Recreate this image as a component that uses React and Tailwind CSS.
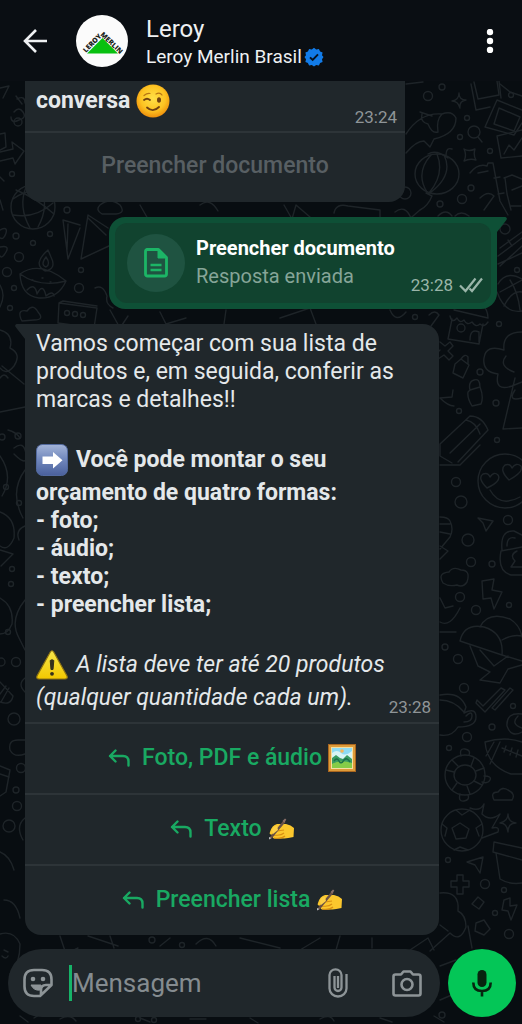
import { useState } from "react";

const Doodles = () => (
  <svg
    className="absolute inset-0 h-full w-full"
    viewBox="0 0 522 1024"
    preserveAspectRatio="xMidYMin slice"
    fill="none"
    stroke="#1e2428"
    strokeWidth="1.4"
    strokeLinecap="round"
    strokeLinejoin="round"
    aria-hidden="true"
  >
    {/* left side */}
    <path d="M0 88l9-2-6 12M16 96l6 8m-8 8q5-6 9 0t-4 8q-8 4-8-3m6-18q8-4 8 4" />
    <circle cx="18" cy="122" r="4" />
    <path d="M0 134l5-1 1 14-6 3M0 152l13-3-1-7 12 9-9 13-2-6-13 3" />
    <circle cx="12" cy="174" r="2.500" />
    <path d="M0 177l4 4M0 200l3 10" />
    <circle cx="33" cy="207" r="22" />
    <path d="M13 199q20-14 38-4M13 215q22 4 40-12M26 187q-8 20 4 41M40 187q10 18-2 40M16 190q20 8 38 24" />
    <path d="M63 220l5 39 12-31M63 220l17 5M68 224l-1 26M88 215l-7 44 30-14M88 215l20 13M88 218l18 17" />
    <circle cx="67" cy="210" r="3" />
    <circle cx="16" cy="236" r="3" />
    <circle cx="50" cy="234" r="2.500" />
    <circle cx="33" cy="243" r="2.500" />
    <circle cx="19" cy="257" r="4.500" />
    <circle cx="7" cy="272" r="4.500" />
    <circle cx="81" cy="270" r="2.500" />
    <circle cx="79" cy="288" r="4.500" />
    <circle cx="14" cy="288" r="2.500" />
    <circle cx="10" cy="308" r="2.500" />
    <path d="M0 230q8-4 6 3t-6 5M0 247q10-2 6 5t-6 4M0 285q6 10 0 22" />
    <path d="M48 250q-16 14-3 21q12-2 6-14zM46 257q-6 8 0 10q5-3 0-10M20 274q20-14 46 7q-8 18-27 17q-18-2-19-24q20 14 46 7" />
    <path d="M27 290q8-8 10 4q6-12 9 2q7-6 8 0M32 280h1M42 278h1M50 282h1" />
    <path d="M59 303l38 5-3 20-36-5zM59 303l4-2 34 5M21 319q-4-10 6-8q6-8 11 1q7 8-4 8l-12 1z" />
    <circle cx="67" cy="313" r="2.500" />
    <circle cx="75" cy="314" r="2.500" />
    <circle cx="83" cy="315" r="2.500" />
    <path d="M95 288q8-4 12 8q-2 8 6 12M100 205q10-8 20 0q6 8-4 9h-14q-7-4-2-9M140 205l8 14M200 205q10-8 18 6M284 205l8 14 4-14 14 12M334 213q2-10 14-7l32 4v8M395 212q10-8 16 6" />
    <path d="M110 310l10 18 8-12M160 312l6 12 20-6M226 310l-2 14M280 318l30-10 6 16M390 310q6 14 16 2" />
    <path d="M0 330q14 4 10 18q12 6 4 18q-8 10-14 2M2 366l22 18M0 378q4-6 8 0M0 412l25-5M8 430q8 2 12 8" />
    <circle cx="18" cy="436" r="3" />
    <circle cx="2" cy="437" r="3" />
    <path d="M14 448q10-8 12 6t-12 0M0 456q14 20 2 40M25 470q-16 22-2 48M0 512q16 6 14 26q-6 14-14 8M0 550l13 4-12 12M25 526q-10 4-6 14M0 598q14 8 12 26q-4 10-12 10M25 600q-16 20-6 38l6 12" />
    <circle cx="6" cy="487" r="2.500" />
    <circle cx="19" cy="503" r="2.500" />
    <circle cx="12" cy="569" r="2.500" />
    <circle cx="11" cy="584" r="2.500" />
    <circle cx="8" cy="632" r="2.500" />
    <circle cx="1" cy="662" r="4" />
    <circle cx="16" cy="662" r="4.500" />
    <path d="M0 682l13 14q-2 10-13 6M1 702l8-14M0 694l6-8M25 678q-8 6 0 14" />
    <circle cx="14" cy="719" r="6" />
    <path d="M10 750q-2-10 8-10h7M10 750q4 8 15 4M0 766l10 4-4 22-6 4M0 774l9 3" />
    <circle cx="21" cy="768" r="4.500" />
    <circle cx="16" cy="790" r="3" />
    <circle cx="17" cy="806" r="4.500" />
    <circle cx="9" cy="826" r="6" />
    <path d="M25 818q-10 8-2 22M0 852q10 4 14 18M4 900q12 0 16 18M0 934q14-4 20 10q0 20-10 30M4 950l4 2M2 956q4 4 6 0" />

    {/* right side */}
    <path d="M406 84l17-2M500 84l10 8 12 4" />
    <circle cx="428" cy="96" r="4.500" />
    <circle cx="442" cy="87" r="3" />
    <circle cx="511" cy="95" r="2.500" />
    <path d="M459 93q0 7 7 7q-7 1-6 8q-2-7-8-7q7-1 7-8M471 84l5 26 14-3M474 82l4 17 21-4-2-14M499 81l2 17M497 100l25 10M497 100l-12 27 29 8 8-12M499 108l21 9-6 14-20-7z" />
    <path d="M406 134q14-22 36-20q10-4 14 4q0 16-22 21l-4 8-6-6q-8 0-18 12M422 114q-2 8 6 10q4 10 10 8q-2-12 4-18M420 112l12 4" />
    <circle cx="467" cy="118" r="2.500" />
    <circle cx="460" cy="137" r="2.500" />
    <circle cx="474" cy="132" r="6" />
    <path d="M478 137l4 5M497 136l25-6M497 136l4 22 21-2M504 154l5-9 5 5 8-12M464 149q5 3 11 0q-2 6 1 11q-6-2-12 1q3-6 0-12" />
    <circle cx="490" cy="151" r="2.500" />
    <ellipse cx="437" cy="174" rx="22" ry="20" />
    <path d="M431 155q-16 18-4 37M437 154q8 20-8 39M444 155q10 20-14 38M428 154q8-5 20 4M446 155q0-8 6-6M426 193l6 3q-4 10-12 14l-14 12M470 173q8-10 17-7l1-3 5 0 7 38 8 14M488 171l-10 2M494 178l6-1M498 194l6-1M504 178l8-3 10 4M505 178l2 16 4 16M480 198q8-8 14-2l-10 14M512 190l10-4M511 206h10" />
    <circle cx="471" cy="188" r="3" />
    <circle cx="462" cy="199" r="4.500" />
    <circle cx="440" cy="204" r="3" />
    <circle cx="405" cy="193" r="6" />
    <path d="M438 216q8-8 14 0M455 216q6-6 14 0M500 248l22-16M498 256l24-18M500 266l22-20M498 264l24-11M508 240l4 6" />
    <circle cx="505" cy="229" r="5" />
    <circle cx="517" cy="270" r="2.500" />
    <path d="M498 284q8-14 24-5M497 292q8 22 25 19M500 292l22-12M504 306q8-16 18-14M510 280q8 12 10 30" />
    <path d="M450 316q2 8 7 2q3 6 7 2q3 6 8 2q4 6 8 2q4 4 8-2M454 310l34 8q0-8-6-14l-26-6M452 319l-4 20 31 5 4-20M470 340q0-12 9-8v10M429 315q6-6 10 0l-8 11" />
    <circle cx="461" cy="328" r="4" />
    <circle cx="415" cy="317" r="2.500" />
    <circle cx="499" cy="324" r="2.500" />
    <path d="M440 342l5 4 5-4 3 4-5 5 5 5-4 4-5-5-6 4-3-4 5-5M455 364l6-5 8 6-6 13-10-5zM461 359q4-6 7-2v7M470 390l10-3q4 10 1 17l-9 2q-5-8-4-14zM470 390q-2-8 4-10t6 7M440 398l12-1 1-7M440 398q8 8 14 8M522 332q-20 0-18 18q-18-6-20 8t14 16q-4 18 14 12l10-4M514 372q-16-6-8-16M515 378l-12 51 19-1M515 390q-8 12 7 8" />
    <circle cx="480" cy="372" r="3" />
    <circle cx="459" cy="411" r="2.500" />
    <circle cx="496" cy="403" r="3" />
    <circle cx="497" cy="440" r="2.500" />
    <path d="M440 444l30-28q12 0 18 14l-30 32M450 453l30-29M440 444v12l12 7M466 420q10 2 14 14M440 465h20l20-20" />
    <circle cx="456" cy="482" r="4.500" />
    <circle cx="461" cy="502" r="6" />
    <circle cx="505" cy="481" r="27" />
    <path d="M487 488q-10-10-4-14q5-2 7 3q4-6 8-2q4 6-11 13M509 480q-10-10-4-15q5-2 7 3q4-6 9-2q3 6-12 14M490 490q10 18 30 7M478 518l15 3-7 10-3-8zM440 517q8 0 10 4q4 8 0 16l-10 12M440 524h10M440 532l10 2M440 546l8 5-8 8" />
    <circle cx="508" cy="520" r="4.500" />
    <circle cx="468" cy="540" r="6" />
    <circle cx="471" cy="562" r="4.500" />
    <circle cx="492" cy="564" r="3" />
    <path d="M501 551l21-4M501 551q-4 20 10 24h11M502 550q-2-20 12-19l8 4M507 546q0-10 8-8M517 551q-8 4-2 10l-4 6h11M443 583q-6-10 6-11q4-6 12-2q10 0 6 12q-4 6-10 3q-8 2-14-2M482 581l12-2-2 11 10 2-8 17-3-11-8 1z" />
    <circle cx="460" cy="597" r="4.500" />
    <circle cx="476" cy="610" r="4.500" />
    <circle cx="509" cy="605" r="2.500" />
    <path d="M440 598l5 10 8-2M440 622q10 6 20-14M440 632h16M460 641q4-18 24-14q20 6 18 28l-42-14M480 627q8-16 30-8q10 6 12 18M502 640q10-6 20-4M502 655l20 6M470 646l8 20 12 6-10 8 20 3 8-14 14-4M480 650l14 16 14-10" />
    <circle cx="445" cy="647" r="3" />
    <circle cx="458" cy="659" r="4.500" />
    <circle cx="464" cy="688" r="4.500" />
    <path d="M477 700l6 6 18-18 4 2-20 22-9-9zM492 708l18-20 3 2-18 20zM440 695q20-4 26 12l-2 6q12-6 12 4t-18 10q-6 10-18 8M440 700q14 0 24 12M466 716q6-6 6 0t-8 6M522 714q-16-2-15 12q4 12 15 6M518 716q-8 8 4 12" />
    <circle cx="513" cy="706" r="2.500" />
    <circle cx="492" cy="727" r="3" />
    <circle cx="467" cy="737" r="4.500" />
    <circle cx="449" cy="748" r="2.500" />
    <path d="M485 742q20-6 37 0M485 742q2 24 26 32h11M486 756l8-14M490 764l10-22M502 748l20 8M506 746l-2 6M512 748l-2 7M518 750l-2 7" />
    <ellipse cx="465" cy="775" rx="20" ry="20" />
    <ellipse cx="465" cy="775" rx="11" ry="10" />
    <path d="M461 756q-2-8 4-7t4 6M484 776q8 0 6 4t-8 2M460 794q-2 8 4 7t4-6M446 770l8 2M452 760l6 6M474 758l-3 8M484 768l-8 3M482 785l-8-4M470 794l-3-8M452 790l5-7M494 800q-4-8 4-8q4-6 10-2q8 4 4 10z" />
    <circle cx="462" cy="830" r="21" />
    <path d="M452 828l8-5 9 6-3 9-10 1zM456 810l6 5 8-5M442 824l5 4-2 8M482 824l-6 4 3 8M454 850l6-3 8 3M470 808q10 4 14-4l-2 10q8 8 18 0l-8 14q8-2 6 4l-16 6M508 814q0 8 8 9q-8 0-8 9q-1-9-8-9q8-2 8-9M494 842l28 6M494 842l-1 10 29 8M496 853l4 26q10 6 22 4M467 862l16-5-3 16-5-8zM457 875h6v6h6v6h-6v7h-6v-7h-6v-6h6zM478 897l6 5-5 7-7-5zM504 900l6-2v8l7-1-6 15-3-9-6-1z" />
    <circle cx="485" cy="884" r="4.500" />
    <circle cx="448" cy="860" r="2.500" />
    <circle cx="504" cy="890" r="2.500" />
    <circle cx="495" cy="913" r="2.500" />
    <circle cx="509" cy="934" r="4.500" />
    <path d="M440 893q20-2 18 18q8 4 8 16q-6 16-16 6l-20 18M476 923l8-3 6 9-6 6-9-4zM468 926l4 22M440 925l8 6" />

    {/* strips round the message bar */}
    <path d="M60 936l6 18 12-6M88 936l30 10M110 936l4 12M196 944q12-12 20 2M160 946l10-8M240 938l40 10M320 938l-20 12M340 936l-4 14M372 938v10M410 950l18-12 6 12M440 966l16-6M440 1000l14-6M20 1016l8 6M34 1018l10-6M60 1019q10-6 16 2M140 1018l10 4M190 1019h16M250 1018l8 5M320 1019q10-6 14 2M380 1018l12 4M434 1016l10 6" />
    <circle cx="152" cy="940" r="3" />
    <circle cx="182" cy="945" r="2.500" />
    <circle cx="138" cy="1019" r="2.500" />
    <circle cx="154" cy="1020" r="2.500" />
    <circle cx="442" cy="1015" r="3" />
  </svg>
);

const BackIcon = () => (
  <svg className="size-6" viewBox="0 0 24 24" fill="none" stroke="currentColor" strokeWidth="2.600">
    <path d="M24 12H2.500M13 1L2 12l11 11" />
  </svg>
);

const Logo = () => (
  <svg className="size-[52px] shrink-0" viewBox="0 0 52 52" role="img" aria-label="Leroy Merlin">
    <circle cx="26" cy="26" r="26" fill="#fbfbfb" />
    <path d="M26.500 23L42 38.500H11z" fill="#08c010" />
    <g fontFamily="'Open Sans', sans-serif" fontWeight="800" fontSize="7" fill="#1d2420">
      <text transform="translate(10 38) rotate(-46)">LEROY</text>
      <text transform="translate(24 20) rotate(44)">MERLIN</text>
    </g>
  </svg>
);

const VerifiedBadge = () => (
  <svg className="size-5" viewBox="0 0 20 20" role="img" aria-label="Conta verificada">
    <path
      d="M10 .8l2.200 1.700 2.700-.6 1.200 2.500 2.500 1.200-.6 2.700L19.500 10 18 12.200l.6 2.700-2.500 1.200-1.200 2.500-2.700-.6L10 19.500 7.800 18l-2.700.6-1.200-2.500-2.500-1.200.6-2.700L.5 10 2 8.300l-.6-2.700 2.500-1.200 1.200-2.500 2.700.6z"
      fill="#127be8"
    />
    <path d="M6 10.300l2.700 2.700 5.300-5.600" fill="none" stroke="#07131f" strokeWidth="1.900" />
  </svg>
);

const WinkEmoji = () => (
  <svg className="size-[34px]" viewBox="0 0 34 34" role="img" aria-label="😉">
    <defs>
      <radialGradient id="wink" cx="50%" cy="42%" r="58%">
        <stop offset="0" stopColor="#ffe047" />
        <stop offset=".65" stopColor="#fdc322" />
        <stop offset="1" stopColor="#ee8f0c" />
      </radialGradient>
    </defs>
    <circle cx="17" cy="17" r="16.500" fill="url(#wink)" />
    <g fill="none" stroke="#704111" strokeLinecap="round">
      <path d="M8 16q3-2.600 6 0" strokeWidth="1.800" />
      <path d="M8 11.500q3-2.500 6-2" stroke="#b97613" strokeWidth="1.200" />
      <path d="M20 10q4-2 6 1" stroke="#b97613" strokeWidth="1.200" />
      <path d="M11 23.500q6 5.500 12-.5" strokeWidth="1.800" />
    </g>
    <ellipse cx="23" cy="16" rx="2" ry="2.800" fill="#704111" />
  </svg>
);

const ArrowEmoji = () => (
  <svg className="size-8" viewBox="0 0 32 32" role="img" aria-label="➡️">
    <defs>
      <linearGradient id="arrow-box" x2="0" y2="1">
        <stop offset="0" stopColor="#a3b4d8" />
        <stop offset=".5" stopColor="#6f86bb" />
        <stop offset="1" stopColor="#4a609c" />
      </linearGradient>
    </defs>
    <rect x=".5" y=".5" width="31" height="31" rx="6" fill="url(#arrow-box)" stroke="#536a9f" />
    <path d="M6.500 12.500H17V8l9.500 8.200L17 24.500V20H6.500z" fill="#fff" />
  </svg>
);

const WarningEmoji = () => (
  <svg className="h-[30px] w-8" viewBox="0 0 32 30" role="img" aria-label="⚠️">
    <defs>
      <linearGradient id="warning" x2="0" y2="1">
        <stop offset="0" stopColor="#f7e64a" />
        <stop offset="1" stopColor="#f2c800" />
      </linearGradient>
    </defs>
    <path
      d="M14.300 2q1.700-2.500 3.400 0L31 26q1 2.800-2 3H3q-3-.2-2-3z"
      fill="url(#warning)"
      stroke="#8f7412"
      strokeWidth="1.200"
    />
    <path d="M14.200 10.500q1.800-1.500 3.600 0L17 19.500h-2z" fill="#33301c" stroke="#33301c" />
    <circle cx="16" cy="23.800" r="1.900" fill="#33301c" />
  </svg>
);

const PictureEmoji = () => (
  <svg className="size-7" viewBox="0 0 28 28" role="img" aria-label="🖼️">
    <rect x=".5" y=".5" width="27" height="27" fill="#dd9b3a" stroke="#a9661f" />
    <rect x="3" y="3" width="22" height="22" fill="#f6dfa0" />
    <rect x="4" y="4" width="20" height="20" fill="#8edbf3" />
    <path d="M4 9q5-4 9 0t11-2v8H4z" fill="#d8f4f5" />
    <circle cx="14" cy="7" r="1.800" fill="#f7b65a" />
    <path d="M4 14l4-3 4 3 3 1 4-4 5 4v9H4z" fill="#399c63" />
    <path d="M4 20q8-5 20-1v5H4z" fill="#85cc48" />
    <path d="M6 17q3-4 5 0t5-1q3-3 6 2" fill="none" stroke="#1c7049" strokeWidth="1.500" />
  </svg>
);

const WritingEmoji = () => (
  <svg className="h-[22px] w-[26px]" viewBox="0 0 26 22" role="img" aria-label="✍️">
    <path
      d="M2 14Q4 7 9 6l9 0q5 1 8 4l-.5 9q-6 1-9 1.500H6q-2-.5-1-2 .5-1 2-1l-4-1Q1 16 2 14z"
      fill="#fbc72d"
    />
    <path d="M6 17q7 1 10-2M9 13l7-1M6 20q8 1 11-2" fill="none" stroke="#d98f12" strokeWidth="1.200" />
    <path d="M2 19L15.500 2.500l2 1.500L4 20l-2.500 1.500z" fill="#6a5144" />
    <path d="M14.500 3L17 .5l1.300 1-1.800 3z" fill="#8a6f68" />
    <path d="M4 12q1-4 5-4l1 4-5 4z" fill="#fdd046" />
    <path d="M1 19l2.500 1L1 21.500z" fill="#b9bcc0" />
  </svg>
);

const DocumentIcon = () => (
  <svg className="h-[30px] w-6" viewBox="0 0 24 30" fill="none" stroke="#1cb566" strokeWidth="2.800">
    <path d="M3 1.500h11.500l8 8V26q0 2-2 2H3.500q-2 0-2-2V3.500q0-2 2-2z" strokeLinejoin="round" />
    <path d="M14 2v8h8z" fill="#1cb566" strokeWidth="1" />
    <path d="M6.500 17h11M6.500 22h11" strokeWidth="2.400" />
  </svg>
);

const DoubleCheck = () => (
  <svg className="h-4 w-6" viewBox="0 0 24 16" fill="none" stroke="currentColor" strokeWidth="2.200">
    <path d="M1 8.500l5.500 5.500L16.500 1.500M10.500 11.500l2.500 2.500L23 1.500" />
  </svg>
);

const ReplyIcon = () => (
  <svg className="h-[18px] w-[22px]" viewBox="0 0 22 18" fill="none" stroke="currentColor" strokeWidth="2.400">
    <path d="M7.500 1.500L2 7l5.500 5.500M2 7h13q5.500 0 5.500 5.500V16.500" strokeLinecap="round" strokeLinejoin="round" />
  </svg>
);

const StickerIcon = () => (
  <svg className="size-[30px]" viewBox="0 0 30 30" fill="none" stroke="currentColor" strokeWidth="2.600">
    <path
      d="M17 28h-6q-9.500 0-9.500-9.500v-7Q1.500 2 11 2h8q9.500 0 9.500 9.500V17L17 28zM18 27v-5q0-5 5-5h5"
      strokeLinejoin="round"
    />
    <path d="M8 17h10q-1 2-1 5-6 1-9-5z" fill="currentColor" strokeWidth="1" />
    <circle cx="10" cy="11" r="2.300" fill="currentColor" stroke="none" />
    <circle cx="20" cy="11" r="2.300" fill="currentColor" stroke="none" />
  </svg>
);

const ClipIcon = () => (
  <svg className="h-[30px] w-5" viewBox="0 0 20 30" fill="none" stroke="currentColor" strokeWidth="2.300">
    <path d="M18.500 6v14.500a8.500 8 0 0 1-17 0V7a6 5.700 0 0 1 12 0v12.500a3.500 3.500 0 0 1-7 0V8M10 8v12" />
  </svg>
);

const CameraIcon = () => (
  <svg className="h-[27px] w-[30px]" viewBox="0 0 30 27" fill="none" stroke="currentColor" strokeWidth="2.600">
    <path
      d="M3.500 4.500H9l2.500-3h7l2.500 3h5.500q2 0 2 2v17q0 2-2 2h-23q-2 0-2-2v-17q0-2 2-2z"
      strokeLinejoin="round"
    />
    <circle cx="15" cy="14.500" r="5.500" />
  </svg>
);

const MicIcon = () => (
  <svg className="h-7 w-5" viewBox="0 0 20 28" fill="none" stroke="#07240f" strokeWidth="2.600">
    <rect x="5.500" y="1" width="9" height="17" rx="4.500" fill="#07240f" stroke="none" />
    <path d="M1.300 13.500q0 8.500 8.700 8.500t8.700-8.500M10 22v5.500" />
  </svg>
);

const quickReplies = [
  { label: "Foto, PDF e áudio", Emoji: PictureEmoji },
  { label: "Texto", Emoji: WritingEmoji },
  { label: "Preencher lista", Emoji: WritingEmoji },
];

const Header = () => (
  <header className="relative flex h-[81px] items-center bg-[#0a0e13] pr-[22px] pl-[23px] text-[#eef0f2]">
    <button type="button" aria-label="Voltar" className="shrink-0">
      <BackIcon />
    </button>
    <div className="ml-[29px] flex min-w-0 flex-1 items-center gap-[18px]">
      <Logo />
      <div className="min-w-0 pt-1">
        <h1 className="text-[24px] leading-7">Leroy</h1>
        <p className="flex items-center gap-[2px] text-[19px] leading-7">
          Leroy Merlin Brasil <VerifiedBadge />
        </p>
      </div>
    </div>
    <button type="button" aria-label="Mais opções" className="shrink-0">
      <svg className="h-6 w-5" viewBox="0 0 20 24" fill="#fff">
        <circle cx="10" cy="3" r="3.200" />
        <circle cx="10" cy="12" r="3.200" />
        <circle cx="10" cy="21" r="3.200" />
      </svg>
    </button>
  </header>
);

const FirstMessage = () => (
  <article className="w-[380px] max-w-full rounded-b-2xl bg-[#20272b]">
    <div className="flex h-[50px] justify-between pr-2 pl-[11px]">
      <p className="flex h-10 items-center gap-[6px] font-bold">
        conversa <WinkEmoji />
      </p>
      <time className="self-end pb-[2px] text-[17px] leading-6 text-[#8f9598]">23:24</time>
    </div>
    <button
      type="button"
      disabled
      className="h-[71px] w-full border-t-2 border-[#2d3438] pb-1 font-medium text-[#585f63]"
    >
      Preencher documento
    </button>
  </article>
);

const SentMessage = () => (
  <article className="relative mt-[15px] mr-2 w-[388px] max-w-full self-end rounded-2xl rounded-tr-none bg-[#0e5036] p-[6px]">
    <svg className="absolute top-0 left-full h-4 w-[10px]" viewBox="0 0 10 16" fill="#0e5036">
      <path d="M0 0h8.500q2.500 1 .5 3.500L0 15z" />
    </svg>
    <div className="flex h-20 items-center rounded-xl bg-[#11432f] pr-2 pl-3">
      <span className="flex size-[58px] shrink-0 items-center justify-center rounded-full bg-[#1f5341]">
        <DocumentIcon />
      </span>
      <div className="ml-[11px] min-w-0 flex-1 pb-[2px]">
        <h2 className="text-[20px] leading-7 font-bold text-white">Preencher documento</h2>
        <div className="flex h-7 justify-between">
          <p className="text-[20px] leading-7 text-[#86a598]">Resposta enviada</p>
          <p className="flex items-center gap-[6px] self-start pt-[11px] text-[17px] leading-6 text-[#9ab5a9]">
            <time>23:28</time>
            <DoubleCheck />
          </p>
        </div>
      </div>
    </div>
  </article>
);

const ListMessage = () => (
  <article className="relative mt-[15px] w-[414px] max-w-full rounded-2xl rounded-tl-none bg-[#20272b]">
    <svg className="absolute top-0 right-full h-4 w-[10px]" viewBox="0 0 10 16" fill="#20272b">
      <path d="M10 0H1.500q-2.500 1-.5 3.500L10 15z" />
    </svg>
    <div className="pt-[6px] pr-2 pb-[5px] pl-[11px]">
      <p>
        Vamos começar com sua lista de
        <br />
        produtos e, em seguida, conferir as
        <br />
        marcas e detalhes!!
      </p>
      <div className="mt-[30px] font-bold">
        <p className="flex h-8 items-center gap-2">
          <ArrowEmoji /> Você pode montar o seu
        </p>
        <p className="mt-[3px]">orçamento de quatro formas:</p>
        <ul>
          <li>- foto;</li>
          <li>- áudio;</li>
          <li>- texto;</li>
          <li>- preencher lista;</li>
        </ul>
      </div>
      <div className="mt-[30px] italic">
        <p className="flex h-8 items-center gap-2">
          <WarningEmoji /> A lista deve ter até 20 produtos
        </p>
        <div className="mt-[3px] flex justify-between">
          <p>(qualquer quantidade cada um).</p>
          <time className="pt-[13px] text-[17px] leading-5 text-[#8f9598] not-italic">23:28</time>
        </div>
      </div>
    </div>
    {quickReplies.map(({ label, Emoji }) => (
      <button
        key={label}
        type="button"
        className="flex h-[71px] w-full items-center justify-center gap-[6px] border-t-2 border-[#2d3438] pb-[2px] font-medium text-[#19a962]"
      >
        <ReplyIcon />
        <span className="ml-[6px]">{label}</span>
        <Emoji />
      </button>
    ))}
  </article>
);

const Composer = () => {
  const [text, setText] = useState("");

  return (
    <form
      className="relative mt-auto flex gap-2 pt-3 pr-[6px] pb-[7px] pl-2"
      onSubmit={(e) => {
        e.preventDefault();
        setText("");
      }}
    >
      <div className="flex h-[68px] min-w-0 flex-1 items-center rounded-full bg-[#20272b] pr-[18px] pl-[15px] text-[#8d9497]">
        <button type="button" aria-label="Figurinhas" className="shrink-0">
          <StickerIcon />
        </button>
        <span className="ml-4 h-9 w-[3px] shrink-0 bg-[#16b368]" />
        <input
          type="text"
          aria-label="Mensagem"
          placeholder="Mensagem"
          value={text}
          onChange={(e) => setText(e.target.value)}
          className="min-w-0 flex-1 bg-transparent text-[26px] leading-9 text-[#e4e8ea] outline-none placeholder:text-[#858c90]"
        />
        <button type="button" aria-label="Anexar" className="mr-11 shrink-0">
          <ClipIcon />
        </button>
        <button type="button" aria-label="Câmera" className="shrink-0">
          <CameraIcon />
        </button>
      </div>
      <button
        type="button"
        aria-label="Gravar áudio"
        className="flex size-[68px] shrink-0 items-center justify-center rounded-full bg-[#04c657]"
      >
        <MicIcon />
      </button>
    </form>
  );
};

const App = () => {
  return (
    <div className="relative flex min-h-screen flex-col overflow-hidden bg-[#080d11] font-['Roboto',sans-serif] text-[23px] leading-7 text-[#e4e8ea]">
      <Doodles />
      <Header />
      <main className="relative flex flex-col items-start pr-[17px] pl-[25px]">
        <FirstMessage />
        <SentMessage />
        <ListMessage />
      </main>
      <Composer />
    </div>
  );
};

export default App;
